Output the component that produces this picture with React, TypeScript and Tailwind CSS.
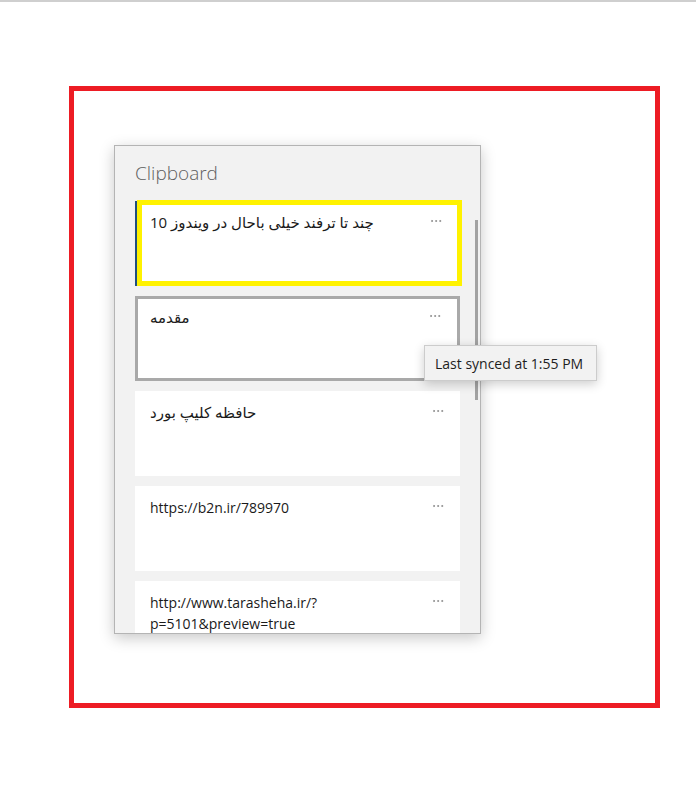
import { MoreHorizontal } from 'lucide-react'

const font = { fontFamily: '"Segoe UI", "Open Sans", "DejaVu Sans", sans-serif' }

type Clip = { id: number; lines: string[]; kind: 'focus' | 'hover' | 'plain'; rtl?: boolean }

const clips: Clip[] = [
  { id: 1, lines: ['چند تا ترفند خیلی باحال در ویندوز 10'], kind: 'focus', rtl: true },
  { id: 2, lines: ['مقدمه'], kind: 'hover', rtl: true },
  { id: 3, lines: ['حافظه کلیپ بورد'], kind: 'plain', rtl: true },
  { id: 4, lines: ['https://b2n.ir/789970'], kind: 'plain' },
  { id: 5, lines: ['http://www.tarasheha.ir/?', 'p=5101&preview=true'], kind: 'plain' },
]

function Dots() {
  return <MoreHorizontal className="h-[14px] w-[16px] text-[#777]" strokeWidth={1.2} />
}

function ClipCard({ clip }: { clip: Clip }) {
  const border =
    clip.kind === 'focus'
      ? 'border-x-2 border-[#1f4f7f]'
      : clip.kind === 'hover'
        ? 'border-[3px] border-[#a9a9a9]'
        : ''
  return (
    <li className={`relative h-[85px] w-[325px] shrink-0 bg-white ${border}`}>
      <div
        className={`flex items-start justify-between pr-[14px] ${
          clip.kind === 'hover' ? 'pl-[12px] pt-[8px]' : clip.kind === 'focus' ? 'pl-[13px] pt-[11px]' : 'pl-[15px] pt-[11px]'
        }`}
      >
        <div className={`leading-[21px] text-[#1a1a1a] ${clip.rtl ? 'text-[15px]' : 'text-[14px]'}`}>
          {clip.lines.map((l) => (
            <p key={l}>{l}</p>
          ))}
        </div>
        <div className="mt-[2px]">
          <Dots />
        </div>
      </div>
      {clip.kind === 'focus' && (
        <div className="pointer-events-none absolute left-0 top-[-1px] h-[86px] w-[325px] border-[5px] border-[#fff200]" />
      )}
    </li>
  )
}

export default function App() {
  return (
    <div className="min-h-[786px] w-[696px] bg-white" style={font}>
      <div className="h-[2px] w-full bg-[#cfcfcf]" />
      <div className="ml-[69px] mt-[84px] h-[622px] w-[591px] border-[5px] border-[#ed1c24] pl-[40px] pt-[54px]">
        <div className="relative flex h-[489px] w-[367px] flex-col border border-[#b4b4b4] bg-[#f2f2f2] shadow-[0_4px_14px_rgba(0,0,0,0.22)]">
          <h1 className="pl-[20px] pt-[14px] text-[19px] leading-[26px] font-light text-[#5f5f5f]">Clipboard</h1>
          <div className="min-h-0 flex-1 overflow-hidden pl-[20px] pt-[15px]">
            <ul className="flex flex-col gap-[10px]">
              {clips.map((c) => (
                <ClipCard key={c.id} clip={c} />
              ))}
            </ul>
          </div>
          <div className="absolute left-[360px] top-[74px] h-[180px] w-[3px] bg-[#a2a2a2]" />
          <div className="absolute left-[309px] top-[199px] flex h-[36px] w-[173px] items-center border border-[#cccccc] bg-[#f2f2f2] pl-[10px] text-[14px] text-[#1e1e1e] shadow-[0_3px_10px_rgba(0,0,0,0.2)]">
            Last synced at 1:55 PM
          </div>
        </div>
      </div>
    </div>
  )
}
